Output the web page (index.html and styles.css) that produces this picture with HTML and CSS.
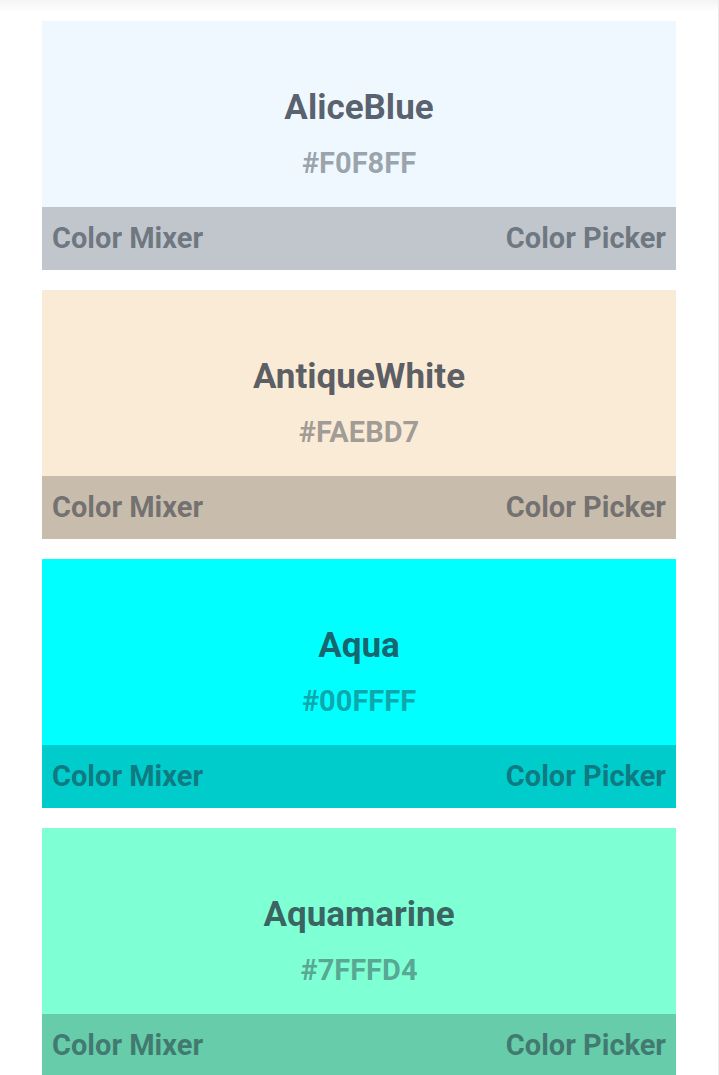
FILE: index.html
```html
<!DOCTYPE html>
<html lang="en">
<head>
<meta charset="utf-8">
<title>Colors</title>
<link rel="stylesheet" href="styles.css">
</head>
<body>
<div class="page">
  <div class="list">
    <div class="card" style="--c:#F0F8FF">
      <div class="card-top">
        <div class="name">AliceBlue</div>
        <div class="hex">#F0F8FF</div>
      </div>
      <div class="bar"><span>Color Mixer</span><span>Color Picker</span></div>
    </div>
    <div class="card" style="--c:#FAEBD7">
      <div class="card-top">
        <div class="name">AntiqueWhite</div>
        <div class="hex">#FAEBD7</div>
      </div>
      <div class="bar"><span>Color Mixer</span><span>Color Picker</span></div>
    </div>
    <div class="card" style="--c:#00FFFF">
      <div class="card-top">
        <div class="name">Aqua</div>
        <div class="hex">#00FFFF</div>
      </div>
      <div class="bar"><span>Color Mixer</span><span>Color Picker</span></div>
    </div>
    <div class="card" style="--c:#7FFFD4">
      <div class="card-top">
        <div class="name">Aquamarine</div>
        <div class="hex">#7FFFD4</div>
      </div>
      <div class="bar"><span>Color Mixer</span><span>Color Picker</span></div>
    </div>
  </div>
</div>
</body>
</html>
```

FILE: styles.css
```css
html {
  overflow: hidden;
}
body {
  margin: 0;
  background: #ffffff;
  font-family: Roboto, "Noto Sans", Arial, sans-serif;
}
.page {
  width: 718px;
  min-height: 1075px;
  border-right: 1px solid #ebebeb;
  background: linear-gradient(#f4f4f4, #ffffff 12px) no-repeat;
}
.list {
  padding: 20.5px 42px 0 42px;
  display: flex;
  flex-direction: column;
  gap: 20px;
}
.card {
  display: flex;
  flex-direction: column;
}
.card-top {
  height: 186.5px;
  background: var(--c);
  display: flex;
  flex-direction: column;
  align-items: center;
  padding-top: 67px;
  box-sizing: border-box;
}
.name {
  font-size: 35px;
  line-height: 40px;
  font-weight: 700;
  color: rgba(31, 41, 55, 0.74);
}
.hex {
  margin-top: 20px;
  font-size: 29px;
  line-height: 30px;
  font-weight: 700;
  color: rgba(31, 41, 55, 0.42);
}
.bar {
  height: 62.5px;
  background: linear-gradient(rgba(0, 0, 0, 0.2), rgba(0, 0, 0, 0.2)), var(--c);
  display: flex;
  justify-content: space-between;
  align-items: center;
  padding: 0 10px;
  font-size: 29px;
  font-weight: 700;
  color: rgba(31, 41, 55, 0.52);
}
```
